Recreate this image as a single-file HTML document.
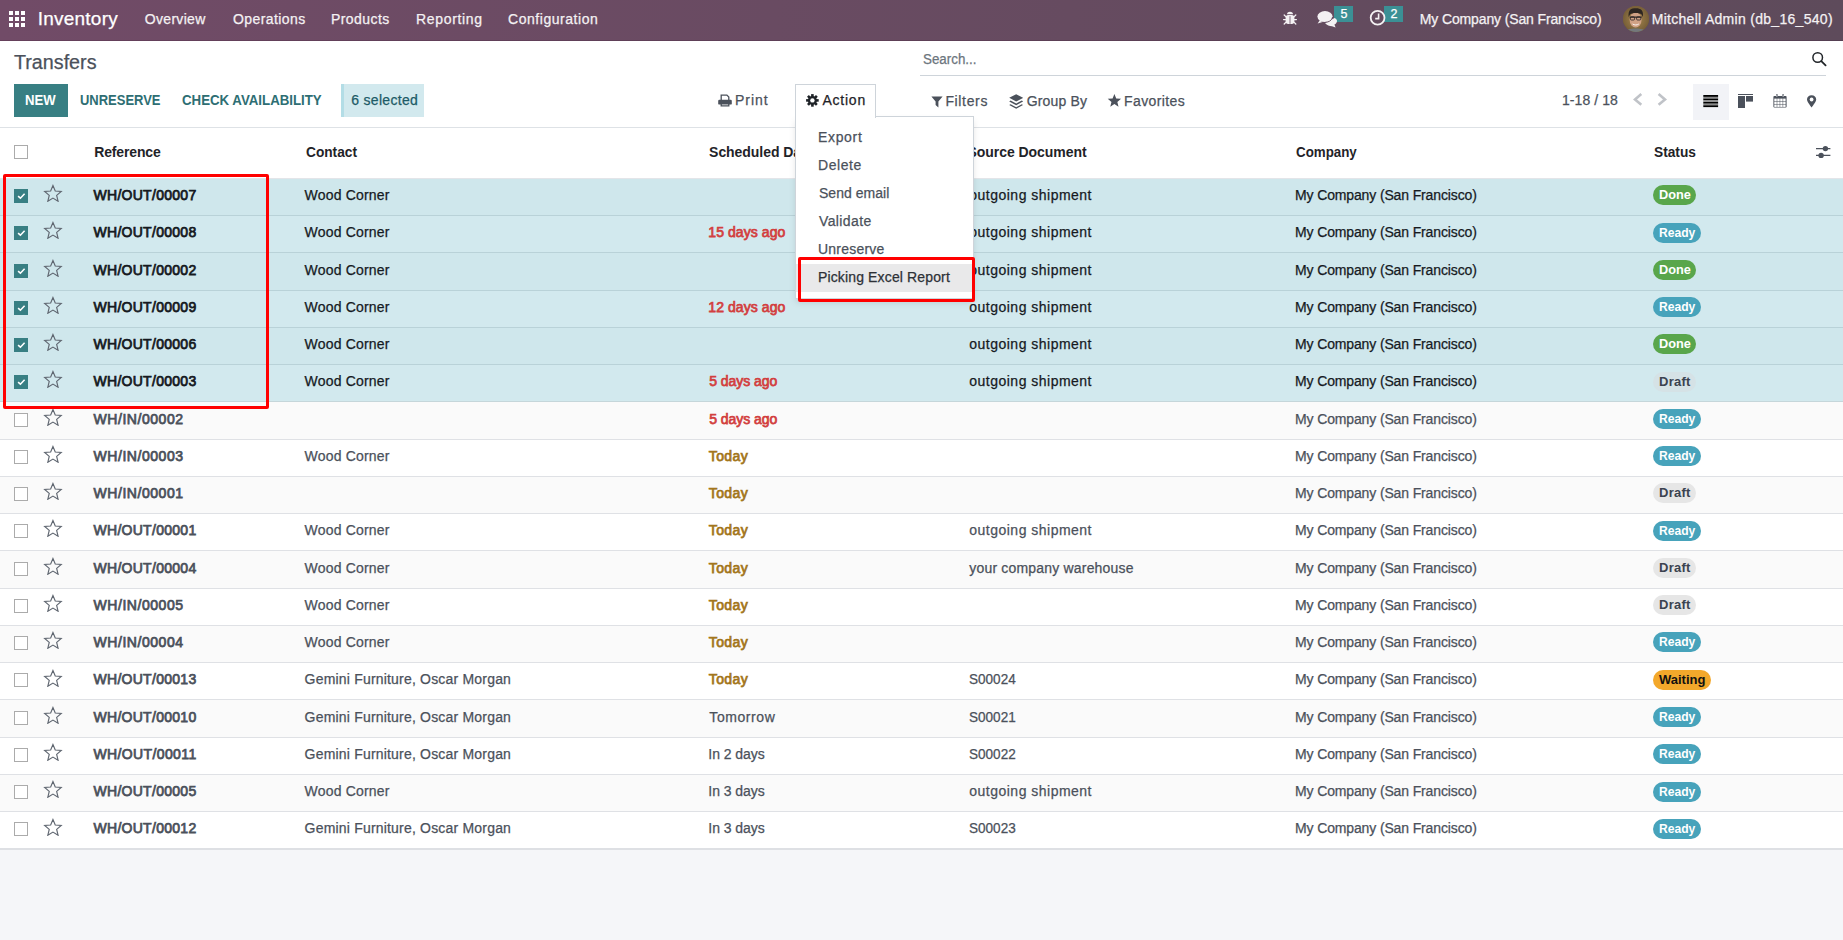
<!DOCTYPE html>
<html><head><meta charset="utf-8"><style>
html,body{margin:0;padding:0;width:1843px;height:940px;overflow:hidden;background:#fff;font-family:"Liberation Sans", sans-serif;}
.a{position:absolute;}
.t{position:absolute;white-space:nowrap;-webkit-text-stroke:0.25px currentColor;}
.badge{position:absolute;height:20px;line-height:20px;border-radius:10px;font-size:12.5px;font-weight:700;text-align:center;font-family:"Liberation Sans", sans-serif;}
svg{position:absolute;}
</style></head><body>
<div class="a" style="left:0.00px;top:0.00px;width:1843.00px;height:40.00px;background:linear-gradient(to right,#714b67,#5e4b5b);"></div><div class="a" style="left:0.00px;top:40.00px;width:1843.00px;height:1.00px;background:linear-gradient(to right,#65405b,#553f52);"></div><div class="a" style="left:8.80px;top:10.90px;width:4.50px;height:4.50px;background:#fff;"></div><div class="a" style="left:14.80px;top:10.90px;width:4.50px;height:4.50px;background:#fff;"></div><div class="a" style="left:20.80px;top:10.90px;width:4.50px;height:4.50px;background:#fff;"></div><div class="a" style="left:8.80px;top:16.90px;width:4.50px;height:4.50px;background:#fff;"></div><div class="a" style="left:14.80px;top:16.90px;width:4.50px;height:4.50px;background:#fff;"></div><div class="a" style="left:20.80px;top:16.90px;width:4.50px;height:4.50px;background:#fff;"></div><div class="a" style="left:8.80px;top:22.90px;width:4.50px;height:4.50px;background:#fff;"></div><div class="a" style="left:14.80px;top:22.90px;width:4.50px;height:4.50px;background:#fff;"></div><div class="a" style="left:20.80px;top:22.90px;width:4.50px;height:4.50px;background:#fff;"></div><div class="t" style="left:37.70px;top:9.32px;font-size:19px;line-height:20px;color:#fff;font-weight:400;letter-spacing:0.231px;">Inventory</div><div class="t" style="left:144.80px;top:9.15px;font-size:14px;line-height:20px;color:#f4f1f3;font-weight:400;letter-spacing:0.309px;">Overview</div><div class="t" style="left:233.00px;top:9.15px;font-size:14px;line-height:20px;color:#f4f1f3;font-weight:400;letter-spacing:0.413px;">Operations</div><div class="t" style="left:331.00px;top:9.15px;font-size:14px;line-height:20px;color:#f4f1f3;font-weight:400;letter-spacing:0.436px;">Products</div><div class="t" style="left:416.00px;top:9.15px;font-size:14px;line-height:20px;color:#f4f1f3;font-weight:400;letter-spacing:0.673px;">Reporting</div><div class="t" style="left:508.00px;top:9.15px;font-size:14px;line-height:20px;color:#f4f1f3;font-weight:400;letter-spacing:0.543px;">Configuration</div><div class="t" style="left:1419.80px;top:9.15px;font-size:14px;line-height:20px;color:#f4f1f3;font-weight:400;letter-spacing:-0.134px;">My Company (San Francisco)</div><div class="t" style="left:1651.70px;top:9.15px;font-size:14px;line-height:20px;color:#f4f1f3;font-weight:400;letter-spacing:0.294px;">Mitchell Admin (db_16_540)</div><div class="a" style="left:1623.00px;top:6.00px;width:26.00px;height:26.00px;border-radius:50%;background:radial-gradient(circle at 50% 45%,#d9b48f 0,#b88a5e 35%,#6b5236 70%,#3d3a36 100%);"></div><div class="a" style="left:1334.00px;top:6.00px;width:19.00px;height:16.00px;background:#3b9095;"></div><div class="t" style="left:1340.50px;top:3.77px;font-size:12.5px;line-height:20px;color:#fff;font-weight:400;letter-spacing:0.000px;">5</div><div class="a" style="left:1384.00px;top:6.00px;width:19.00px;height:16.00px;background:#3b9095;"></div><div class="t" style="left:1390.50px;top:3.77px;font-size:12.5px;line-height:20px;color:#fff;font-weight:400;letter-spacing:0.000px;">2</div><div class="t" style="left:14.00px;top:52.17px;font-size:20px;line-height:20px;color:#4b515b;font-weight:400;letter-spacing:0.000px;transform:scaleX(0.9854);transform-origin:0.00px 0;">Transfers</div><div class="t" style="left:922.60px;top:49.05px;font-size:14px;line-height:20px;color:#6c757d;font-weight:400;letter-spacing:0.000px;transform:scaleX(0.9540);transform-origin:0.00px 0;">Search...</div><div class="a" style="left:920.00px;top:75.00px;width:906.00px;height:1.00px;background:#ced4da;"></div><div class="a" style="left:14.00px;top:84.00px;width:54.00px;height:33.00px;background:#387f83;"></div><div class="t" style="left:25.20px;top:90.25px;font-size:14px;line-height:20px;color:#fff;font-weight:700;letter-spacing:0.000px;-webkit-text-stroke:0;transform:scaleX(0.9388);transform-origin:0.00px 0;">NEW</div><div class="t" style="left:79.80px;top:90.25px;font-size:14px;line-height:20px;color:#2e6e73;font-weight:700;letter-spacing:0.000px;-webkit-text-stroke:0;transform:scaleX(0.9267);transform-origin:0.00px 0;">UNRESERVE</div><div class="t" style="left:182.00px;top:90.25px;font-size:14px;line-height:20px;color:#2e6e73;font-weight:700;letter-spacing:0.000px;-webkit-text-stroke:0;transform:scaleX(0.9469);transform-origin:0.00px 0;">CHECK AVAILABILITY</div><div class="a" style="left:341.00px;top:84.00px;width:83.00px;height:33.00px;background:#d2e9ee;border-left:3px solid #b3dde6;box-sizing:border-box;"></div><div class="t" style="left:351.20px;top:89.65px;font-size:14px;line-height:20px;color:#1d5b67;font-weight:400;letter-spacing:0.318px;">6 selected</div><div class="a" style="left:795.00px;top:84.00px;width:81.00px;height:34.00px;background:#fff;border:1px solid #ced4da;border-bottom:none;box-sizing:border-box;z-index:11;"></div><div class="t" style="left:735.00px;top:90.25px;font-size:14px;line-height:20px;color:#4b515b;font-weight:400;letter-spacing:0.976px;">Print</div><div class="t" style="left:822.40px;top:90.25px;font-size:14px;line-height:20px;color:#1f2328;font-weight:400;letter-spacing:0.775px;z-index:12;">Action</div><div class="t" style="left:945.40px;top:90.95px;font-size:14px;line-height:20px;color:#4b515b;font-weight:400;letter-spacing:0.648px;">Filters</div><div class="t" style="left:1026.70px;top:90.95px;font-size:14px;line-height:20px;color:#4b515b;font-weight:400;letter-spacing:0.152px;">Group By</div><div class="t" style="left:1124.00px;top:90.95px;font-size:14px;line-height:20px;color:#4b515b;font-weight:400;letter-spacing:0.403px;">Favorites</div><div class="t" style="left:1562.00px;top:90.25px;font-size:14px;line-height:20px;color:#4b515b;font-weight:400;letter-spacing:0.066px;">1-18 / 18</div><div class="a" style="left:1693.00px;top:84.00px;width:36.00px;height:36.00px;background:#f2f3f7;"></div><div class="a" style="left:0.00px;top:127.00px;width:1843.00px;height:1.00px;background:#dee2e6;"></div><svg style="left:1282px;top:9.6px;" width="16" height="15" viewBox="0 0 16 15"><g fill="#f4f1f3" stroke="none"><path d="M5 4.3 A3 2.6 0 0 1 11 4.3 Z"/><rect x="3.6" y="4.9" width="8.8" height="9" rx="2.6"/></g><g stroke="#f4f1f3" stroke-width="1.3" fill="none" stroke-linecap="round"><path d="M3.8 6.6 L2.2 5 M3.6 9.6 H1.6 M3.8 12.4 L2.2 14 M12.2 6.6 L13.8 5 M12.4 9.6 H14.4 M12.2 12.4 L13.8 14"/></g><rect x="7.6" y="6.2" width="0.8" height="7.6" fill="#6a4b63"/></svg><svg style="left:1316px;top:10px;" width="22" height="18" viewBox="0 0 22 18"><g fill="#f4f1f3"><path d="M9 13 C11 15.5 13.5 16 16 16.2 L19.6 17.6 L18.4 14.6 C20 13.8 21 12.4 21 11 C21 9.5 20 8.5 18.5 8 Z"/><ellipse cx="9" cy="6.6" rx="7.6" ry="5.5"/><path d="M3.6 10.5 L1.6 13.6 L6.6 12 Z"/></g><path d="M9 12.4 C12 12.4 16 10.8 16.6 7" stroke="#634a5f" stroke-width="0.9" fill="none"/></svg><svg style="left:1369px;top:9.2px;" width="18" height="18" viewBox="0 0 18 18"><circle cx="8.6" cy="8.7" r="6.9" fill="none" stroke="#f4f1f3" stroke-width="1.8"/><path d="M9.6 4.6 V9.6 H6.2" fill="none" stroke="#f4f1f3" stroke-width="1.6"/></svg><svg style="left:1623px;top:6px;" width="26" height="26" viewBox="0 0 26 26"><defs><clipPath id="av"><circle cx="13" cy="13" r="13"/></clipPath><radialGradient id="avg" cx="50%" cy="50%" r="60%"><stop offset="0" stop-color="#a9874f"/><stop offset="1" stop-color="#6d5733"/></radialGradient></defs><g clip-path="url(#av)"><rect width="26" height="26" fill="url(#avg)"/><ellipse cx="12.6" cy="13.8" rx="6" ry="7.6" fill="#d0a185"/><path d="M5.6 11 C5 3.5 8 2.2 12.8 2.2 C18 2.2 20.6 4 20 11 L18.6 8.6 C16.5 6.6 9 6.6 7 8.6 Z" fill="#2e2622"/><path d="M6.8 11.2 H18.6" stroke="#2a2524" stroke-width="1.3"/><rect x="7.4" y="10.8" width="4.2" height="3.2" rx="1" fill="none" stroke="#2a2524" stroke-width="0.8"/><rect x="13.6" y="10.8" width="4.2" height="3.2" rx="1" fill="none" stroke="#2a2524" stroke-width="0.8"/><path d="M9.6 18 C11.5 19.3 14 19.3 15.8 18" stroke="#fff" stroke-width="0.9" fill="none"/><path d="M1 27 C3 21 22 21 25 27 Z" fill="#73787c"/></g></svg><svg style="left:1810px;top:50px;" width="18" height="18" viewBox="0 0 18 18"><circle cx="7.7" cy="7.5" r="4.8" fill="none" stroke="#212529" stroke-width="1.5"/><path d="M11.3 11.2 L15.6 15.3" stroke="#212529" stroke-width="1.8" stroke-linecap="round"/></svg><svg style="left:718px;top:93.5px;" width="14" height="13" viewBox="0 0 14 13"><g fill="none" stroke="#4b515b" stroke-width="1.3"><path d="M3.2 6 V1.1 H8.9 L10.8 3 V6"/><path d="M3.2 9.6 V11.9 H10.8 V9.6"/></g><rect x="0.2" y="5.8" width="13.6" height="4.8" rx="1.2" fill="#4b515b"/></svg><svg style="left:806px;top:93.6px;z-index:12;" width="13" height="13" viewBox="0 0 13 13"><g fill="#1f2328"><rect x="5.1" y="0.1" width="2.6" height="3" transform="rotate(0 6.4 6.4)"/><rect x="5.1" y="0.1" width="2.6" height="3" transform="rotate(45 6.4 6.4)"/><rect x="5.1" y="0.1" width="2.6" height="3" transform="rotate(90 6.4 6.4)"/><rect x="5.1" y="0.1" width="2.6" height="3" transform="rotate(135 6.4 6.4)"/><rect x="5.1" y="0.1" width="2.6" height="3" transform="rotate(180 6.4 6.4)"/><rect x="5.1" y="0.1" width="2.6" height="3" transform="rotate(225 6.4 6.4)"/><rect x="5.1" y="0.1" width="2.6" height="3" transform="rotate(270 6.4 6.4)"/><rect x="5.1" y="0.1" width="2.6" height="3" transform="rotate(315 6.4 6.4)"/><circle cx="6.4" cy="6.4" r="4.5"/></g><circle cx="6.4" cy="6.4" r="2.2" fill="#fff"/></svg><svg style="left:930.5px;top:95.5px;" width="12" height="12" viewBox="0 0 12 12"><path d="M0.4 0.4 H11.6 L7.4 5.4 V11.6 L4.6 9 V5.4 Z" fill="#4b515b"/></svg><svg style="left:1008.5px;top:93.5px;" width="14.5" height="15" viewBox="0 0 14.5 15"><g fill="#4b515b"><path d="M7.2 0.2 L14.2 3.8 L7.2 7.6 L0.2 3.8 Z"/><path d="M1.6 6.6 L7.2 9.6 L12.8 6.6 L14.2 7.4 L7.2 11.2 L0.2 7.4 Z"/><path d="M1.6 10.2 L7.2 13.2 L12.8 10.2 L14.2 11 L7.2 14.8 L0.2 11 Z"/></g></svg><svg style="left:1107px;top:93px;" width="15" height="15" viewBox="0 0 15 15"><polygon points="7.40,1.00 9.22,5.49 14.06,5.84 10.35,8.96 11.51,13.66 7.40,11.10 3.29,13.66 4.45,8.96 0.74,5.84 5.58,5.49" fill="#4b515b"/></svg><svg style="left:1632px;top:92px;" width="12" height="15" viewBox="0 0 12 15"><path d="M9.3 2 L3 7.4 L9.3 12.8" fill="none" stroke="#c0c3c8" stroke-width="2.6"/></svg><svg style="left:1656px;top:92px;" width="12" height="15" viewBox="0 0 12 15"><path d="M2.6 2 L9 7.4 L2.6 12.8" fill="none" stroke="#c0c3c8" stroke-width="2.6"/></svg><svg style="left:1703px;top:94px;" width="16" height="14" viewBox="0 0 16 14"><g fill="#000"><rect x="0.3" y="1" width="14.8" height="1.9"/><rect x="0.3" y="4.4" width="14.8" height="1.9"/><rect x="0.3" y="7.8" width="14.8" height="1.9"/><rect x="0.3" y="11.2" width="14.8" height="1.9"/></g><g fill="#888"><rect x="0.3" y="2.9" width="14.8" height="1.5"/><rect x="0.3" y="6.3" width="14.8" height="1.5"/><rect x="0.3" y="9.7" width="14.8" height="1.5"/></g></svg><svg style="left:1738px;top:94px;" width="16" height="15" viewBox="0 0 16 15"><g fill="#4b515b"><rect x="0" y="0" width="15" height="1"/><rect x="0" y="2" width="7" height="12"/><rect x="8" y="2" width="7" height="5.6"/></g></svg><svg style="left:1773.3px;top:94px;" width="14" height="14" viewBox="0 0 14 14"><rect x="0.4" y="2" width="13.2" height="11.6" rx="1" fill="#4b515b"/><g fill="#fff"><rect x="1.30" y="4.60" width="2.45" height="2.45"/><rect x="1.30" y="7.55" width="2.45" height="2.45"/><rect x="1.30" y="10.50" width="2.45" height="2.45"/><rect x="4.25" y="4.60" width="2.45" height="2.45"/><rect x="4.25" y="7.55" width="2.45" height="2.45"/><rect x="4.25" y="10.50" width="2.45" height="2.45"/><rect x="7.20" y="4.60" width="2.45" height="2.45"/><rect x="7.20" y="7.55" width="2.45" height="2.45"/><rect x="7.20" y="10.50" width="2.45" height="2.45"/><rect x="10.15" y="4.60" width="2.45" height="2.45"/><rect x="10.15" y="7.55" width="2.45" height="2.45"/><rect x="10.15" y="10.50" width="2.45" height="2.45"/></g><g fill="#4b515b"><rect x="3" y="0" width="1.8" height="3.4" rx="0.9"/><rect x="9.2" y="0" width="1.8" height="3.4" rx="0.9"/></g><rect x="3.5" y="0.6" width="0.8" height="2.2" fill="#fff"/><rect x="9.7" y="0.6" width="0.8" height="2.2" fill="#fff"/></svg><svg style="left:1806.5px;top:94.5px;" width="10" height="13" viewBox="0 0 10 13"><path d="M4.6 0.3 C7.3 0.3 9.2 2.2 9.2 4.6 C9.2 6.6 6.5 10 4.6 12.6 C2.7 10 0 6.6 0 4.6 C0 2.2 1.9 0.3 4.6 0.3 Z" fill="#4b515b"/><circle cx="4.6" cy="4.5" r="1.9" fill="#fff"/></svg><div class="a" style="left:0.00px;top:128.00px;width:1843.00px;height:50.00px;background:#fff;"></div><div class="a" style="left:0.00px;top:178.00px;width:1843.00px;height:1.00px;background:#e3e6ea;"></div><div class="t" style="left:94.20px;top:142.05px;font-size:14px;line-height:20px;color:#1f2328;font-weight:700;letter-spacing:-0.140px;-webkit-text-stroke:0;">Reference</div><div class="t" style="left:305.50px;top:142.05px;font-size:14px;line-height:20px;color:#1f2328;font-weight:700;letter-spacing:0.000px;-webkit-text-stroke:0;transform:scaleX(0.9781);transform-origin:0.00px 0;">Contact</div><div class="t" style="left:709.10px;top:142.05px;font-size:14px;line-height:20px;color:#1f2328;font-weight:700;letter-spacing:-0.050px;-webkit-text-stroke:0;">Scheduled Date</div><div class="t" style="left:1296.40px;top:142.05px;font-size:14px;line-height:20px;color:#1f2328;font-weight:700;letter-spacing:0.000px;-webkit-text-stroke:0;transform:scaleX(0.9531);transform-origin:0.00px 0;">Company</div><div class="t" style="left:1653.90px;top:142.05px;font-size:14px;line-height:20px;color:#1f2328;font-weight:700;letter-spacing:0.000px;-webkit-text-stroke:0;transform:scaleX(0.9791);transform-origin:0.00px 0;">Status</div><div class="t" style="left:967.56px;top:142.05px;font-size:14px;line-height:20px;color:#1f2328;font-weight:700;letter-spacing:-0.050px;-webkit-text-stroke:0;">Source Document</div><svg style="left:1815px;top:144px;" width="17" height="15" viewBox="0 0 17 15"><g stroke="#4b515b" stroke-width="1.2"><path d="M1 4.6 H15.4 M1 11.4 H15.4"/></g><g fill="#4b515b"><circle cx="10.4" cy="4.6" r="2.7"/><circle cx="6.1" cy="11.4" r="2.7"/></g></svg><div class="a" style="left:14.00px;top:145.00px;width:14.00px;height:14.00px;border:1px solid #ababab;box-sizing:border-box;background:#fff;"></div><div class="a" style="left:0.00px;top:178.34px;width:1843.00px;height:37.26px;background:#cfe7ec;"></div><div class="a" style="left:0.00px;top:215.60px;width:1843.00px;height:37.26px;background:#d2e9ee;"></div><div class="a" style="left:0.00px;top:252.86px;width:1843.00px;height:37.26px;background:#cfe7ec;"></div><div class="a" style="left:0.00px;top:290.12px;width:1843.00px;height:37.26px;background:#d2e9ee;"></div><div class="a" style="left:0.00px;top:327.38px;width:1843.00px;height:37.26px;background:#cfe7ec;"></div><div class="a" style="left:0.00px;top:364.64px;width:1843.00px;height:37.26px;background:#d2e9ee;"></div><div class="a" style="left:0.00px;top:401.90px;width:1843.00px;height:37.26px;background:#fafafa;"></div><div class="a" style="left:0.00px;top:439.16px;width:1843.00px;height:37.26px;background:#ffffff;"></div><div class="a" style="left:0.00px;top:476.42px;width:1843.00px;height:37.26px;background:#fafafa;"></div><div class="a" style="left:0.00px;top:513.68px;width:1843.00px;height:37.26px;background:#ffffff;"></div><div class="a" style="left:0.00px;top:550.94px;width:1843.00px;height:37.26px;background:#fafafa;"></div><div class="a" style="left:0.00px;top:588.20px;width:1843.00px;height:37.26px;background:#ffffff;"></div><div class="a" style="left:0.00px;top:625.46px;width:1843.00px;height:37.26px;background:#fafafa;"></div><div class="a" style="left:0.00px;top:662.72px;width:1843.00px;height:37.26px;background:#ffffff;"></div><div class="a" style="left:0.00px;top:699.98px;width:1843.00px;height:37.26px;background:#fafafa;"></div><div class="a" style="left:0.00px;top:737.24px;width:1843.00px;height:37.26px;background:#ffffff;"></div><div class="a" style="left:0.00px;top:774.50px;width:1843.00px;height:37.26px;background:#fafafa;"></div><div class="a" style="left:0.00px;top:811.76px;width:1843.00px;height:37.26px;background:#ffffff;"></div><div class="a" style="left:0.00px;top:178.00px;width:1843.00px;height:1.00px;background:#e3e5e9;"></div><div class="a" style="left:0.00px;top:215.10px;width:1843.00px;height:1.00px;background:#b9d2d8;"></div><div class="a" style="left:0.00px;top:252.36px;width:1843.00px;height:1.00px;background:#b9d2d8;"></div><div class="a" style="left:0.00px;top:289.62px;width:1843.00px;height:1.00px;background:#b9d2d8;"></div><div class="a" style="left:0.00px;top:326.88px;width:1843.00px;height:1.00px;background:#b9d2d8;"></div><div class="a" style="left:0.00px;top:364.14px;width:1843.00px;height:1.00px;background:#b9d2d8;"></div><div class="a" style="left:0.00px;top:401.40px;width:1843.00px;height:1.00px;background:#c5d6da;"></div><div class="a" style="left:0.00px;top:438.66px;width:1843.00px;height:1.00px;background:#dfe1e5;"></div><div class="a" style="left:0.00px;top:475.92px;width:1843.00px;height:1.00px;background:#dfe1e5;"></div><div class="a" style="left:0.00px;top:513.18px;width:1843.00px;height:1.00px;background:#dfe1e5;"></div><div class="a" style="left:0.00px;top:550.44px;width:1843.00px;height:1.00px;background:#dfe1e5;"></div><div class="a" style="left:0.00px;top:587.70px;width:1843.00px;height:1.00px;background:#dfe1e5;"></div><div class="a" style="left:0.00px;top:624.96px;width:1843.00px;height:1.00px;background:#dfe1e5;"></div><div class="a" style="left:0.00px;top:662.22px;width:1843.00px;height:1.00px;background:#dfe1e5;"></div><div class="a" style="left:0.00px;top:699.48px;width:1843.00px;height:1.00px;background:#dfe1e5;"></div><div class="a" style="left:0.00px;top:736.74px;width:1843.00px;height:1.00px;background:#dfe1e5;"></div><div class="a" style="left:0.00px;top:774.00px;width:1843.00px;height:1.00px;background:#dfe1e5;"></div><div class="a" style="left:0.00px;top:811.26px;width:1843.00px;height:1.00px;background:#dfe1e5;"></div><div class="t" style="left:93.50px;top:184.99px;font-size:14px;line-height:20px;color:#161a1f;font-weight:400;letter-spacing:0.282px;-webkit-text-stroke:0.75px currentColor;">WH/OUT/00007</div><div class="t" style="left:304.60px;top:184.99px;font-size:14px;line-height:20px;color:#161a1f;font-weight:400;letter-spacing:0.186px;">Wood Corner</div><div class="t" style="left:969.30px;top:184.99px;font-size:14px;line-height:20px;color:#161a1f;font-weight:400;letter-spacing:0.486px;">outgoing shipment</div><div class="t" style="left:1295.00px;top:184.99px;font-size:14px;line-height:20px;color:#161a1f;font-weight:400;letter-spacing:-0.134px;">My Company (San Francisco)</div><div class="badge" style="left:1653px;top:185.34px;width:43px;background:#59a64b;"></div><div class="t" style="left:1659.00px;top:185.34px;font-size:13px;line-height:20px;color:#fff;font-weight:700;letter-spacing:0.000px;-webkit-text-stroke:0;transform:scaleX(0.9823);transform-origin:0.00px 0;">Done</div><svg style="left:43px;top:184.14000000000001px;" width="20" height="18" viewBox="0 0 20 18"><polygon points="9.95,1.50 12.24,7.04 18.22,7.51 13.66,11.41 15.06,17.24 9.95,14.10 4.84,17.24 6.24,11.41 1.68,7.51 7.66,7.04" fill="none" stroke="#5f6670" stroke-width="1.15" stroke-linejoin="miter"/></svg><div class="a" style="left:14.00px;top:189.04px;width:14.00px;height:14.00px;background:#387f83;"></div><svg style="left:14px;top:189.04px;" width="14" height="14" viewBox="0 0 14 14"><path d="M4.1 7.2 L6.4 9.2 L10.6 4.8" fill="none" stroke="#fff" stroke-width="1.6"/></svg><div class="t" style="left:93.50px;top:222.25px;font-size:14px;line-height:20px;color:#161a1f;font-weight:400;letter-spacing:0.282px;-webkit-text-stroke:0.75px currentColor;">WH/OUT/00008</div><div class="t" style="left:304.60px;top:222.25px;font-size:14px;line-height:20px;color:#161a1f;font-weight:400;letter-spacing:0.186px;">Wood Corner</div><div class="t" style="left:708.30px;top:222.25px;font-size:14px;line-height:20px;color:#d23f3f;font-weight:400;letter-spacing:0.070px;-webkit-text-stroke:0.75px currentColor;">15 days ago</div><div class="t" style="left:969.30px;top:222.25px;font-size:14px;line-height:20px;color:#161a1f;font-weight:400;letter-spacing:0.486px;">outgoing shipment</div><div class="t" style="left:1295.00px;top:222.25px;font-size:14px;line-height:20px;color:#161a1f;font-weight:400;letter-spacing:-0.134px;">My Company (San Francisco)</div><div class="badge" style="left:1653px;top:222.60px;width:48px;background:#47a3bb;"></div><div class="t" style="left:1659.00px;top:222.60px;font-size:13px;line-height:20px;color:#fff;font-weight:700;letter-spacing:0.000px;-webkit-text-stroke:0;transform:scaleX(0.9299);transform-origin:0.00px 0;">Ready</div><svg style="left:43px;top:221.4px;" width="20" height="18" viewBox="0 0 20 18"><polygon points="9.95,1.50 12.24,7.04 18.22,7.51 13.66,11.41 15.06,17.24 9.95,14.10 4.84,17.24 6.24,11.41 1.68,7.51 7.66,7.04" fill="none" stroke="#5f6670" stroke-width="1.15" stroke-linejoin="miter"/></svg><div class="a" style="left:14.00px;top:226.30px;width:14.00px;height:14.00px;background:#387f83;"></div><svg style="left:14px;top:226.29999999999998px;" width="14" height="14" viewBox="0 0 14 14"><path d="M4.1 7.2 L6.4 9.2 L10.6 4.8" fill="none" stroke="#fff" stroke-width="1.6"/></svg><div class="t" style="left:93.50px;top:259.51px;font-size:14px;line-height:20px;color:#161a1f;font-weight:400;letter-spacing:0.282px;-webkit-text-stroke:0.75px currentColor;">WH/OUT/00002</div><div class="t" style="left:304.60px;top:259.51px;font-size:14px;line-height:20px;color:#161a1f;font-weight:400;letter-spacing:0.186px;">Wood Corner</div><div class="t" style="left:969.30px;top:259.51px;font-size:14px;line-height:20px;color:#161a1f;font-weight:400;letter-spacing:0.486px;">outgoing shipment</div><div class="t" style="left:1295.00px;top:259.51px;font-size:14px;line-height:20px;color:#161a1f;font-weight:400;letter-spacing:-0.134px;">My Company (San Francisco)</div><div class="badge" style="left:1653px;top:259.86px;width:43px;background:#59a64b;"></div><div class="t" style="left:1659.00px;top:259.86px;font-size:13px;line-height:20px;color:#fff;font-weight:700;letter-spacing:0.000px;-webkit-text-stroke:0;transform:scaleX(0.9823);transform-origin:0.00px 0;">Done</div><svg style="left:43px;top:258.66px;" width="20" height="18" viewBox="0 0 20 18"><polygon points="9.95,1.50 12.24,7.04 18.22,7.51 13.66,11.41 15.06,17.24 9.95,14.10 4.84,17.24 6.24,11.41 1.68,7.51 7.66,7.04" fill="none" stroke="#5f6670" stroke-width="1.15" stroke-linejoin="miter"/></svg><div class="a" style="left:14.00px;top:263.56px;width:14.00px;height:14.00px;background:#387f83;"></div><svg style="left:14px;top:263.56px;" width="14" height="14" viewBox="0 0 14 14"><path d="M4.1 7.2 L6.4 9.2 L10.6 4.8" fill="none" stroke="#fff" stroke-width="1.6"/></svg><div class="t" style="left:93.50px;top:296.77px;font-size:14px;line-height:20px;color:#161a1f;font-weight:400;letter-spacing:0.282px;-webkit-text-stroke:0.75px currentColor;">WH/OUT/00009</div><div class="t" style="left:304.60px;top:296.77px;font-size:14px;line-height:20px;color:#161a1f;font-weight:400;letter-spacing:0.186px;">Wood Corner</div><div class="t" style="left:708.30px;top:296.77px;font-size:14px;line-height:20px;color:#d23f3f;font-weight:400;letter-spacing:0.070px;-webkit-text-stroke:0.75px currentColor;">12 days ago</div><div class="t" style="left:969.30px;top:296.77px;font-size:14px;line-height:20px;color:#161a1f;font-weight:400;letter-spacing:0.486px;">outgoing shipment</div><div class="t" style="left:1295.00px;top:296.77px;font-size:14px;line-height:20px;color:#161a1f;font-weight:400;letter-spacing:-0.134px;">My Company (San Francisco)</div><div class="badge" style="left:1653px;top:297.12px;width:48px;background:#47a3bb;"></div><div class="t" style="left:1659.00px;top:297.12px;font-size:13px;line-height:20px;color:#fff;font-weight:700;letter-spacing:0.000px;-webkit-text-stroke:0;transform:scaleX(0.9299);transform-origin:0.00px 0;">Ready</div><svg style="left:43px;top:295.92px;" width="20" height="18" viewBox="0 0 20 18"><polygon points="9.95,1.50 12.24,7.04 18.22,7.51 13.66,11.41 15.06,17.24 9.95,14.10 4.84,17.24 6.24,11.41 1.68,7.51 7.66,7.04" fill="none" stroke="#5f6670" stroke-width="1.15" stroke-linejoin="miter"/></svg><div class="a" style="left:14.00px;top:300.82px;width:14.00px;height:14.00px;background:#387f83;"></div><svg style="left:14px;top:300.82px;" width="14" height="14" viewBox="0 0 14 14"><path d="M4.1 7.2 L6.4 9.2 L10.6 4.8" fill="none" stroke="#fff" stroke-width="1.6"/></svg><div class="t" style="left:93.50px;top:334.03px;font-size:14px;line-height:20px;color:#161a1f;font-weight:400;letter-spacing:0.282px;-webkit-text-stroke:0.75px currentColor;">WH/OUT/00006</div><div class="t" style="left:304.60px;top:334.03px;font-size:14px;line-height:20px;color:#161a1f;font-weight:400;letter-spacing:0.186px;">Wood Corner</div><div class="t" style="left:969.30px;top:334.03px;font-size:14px;line-height:20px;color:#161a1f;font-weight:400;letter-spacing:0.486px;">outgoing shipment</div><div class="t" style="left:1295.00px;top:334.03px;font-size:14px;line-height:20px;color:#161a1f;font-weight:400;letter-spacing:-0.134px;">My Company (San Francisco)</div><div class="badge" style="left:1653px;top:334.38px;width:43px;background:#59a64b;"></div><div class="t" style="left:1659.00px;top:334.38px;font-size:13px;line-height:20px;color:#fff;font-weight:700;letter-spacing:0.000px;-webkit-text-stroke:0;transform:scaleX(0.9823);transform-origin:0.00px 0;">Done</div><svg style="left:43px;top:333.18px;" width="20" height="18" viewBox="0 0 20 18"><polygon points="9.95,1.50 12.24,7.04 18.22,7.51 13.66,11.41 15.06,17.24 9.95,14.10 4.84,17.24 6.24,11.41 1.68,7.51 7.66,7.04" fill="none" stroke="#5f6670" stroke-width="1.15" stroke-linejoin="miter"/></svg><div class="a" style="left:14.00px;top:338.08px;width:14.00px;height:14.00px;background:#387f83;"></div><svg style="left:14px;top:338.08px;" width="14" height="14" viewBox="0 0 14 14"><path d="M4.1 7.2 L6.4 9.2 L10.6 4.8" fill="none" stroke="#fff" stroke-width="1.6"/></svg><div class="t" style="left:93.50px;top:371.29px;font-size:14px;line-height:20px;color:#161a1f;font-weight:400;letter-spacing:0.282px;-webkit-text-stroke:0.75px currentColor;">WH/OUT/00003</div><div class="t" style="left:304.60px;top:371.29px;font-size:14px;line-height:20px;color:#161a1f;font-weight:400;letter-spacing:0.186px;">Wood Corner</div><div class="t" style="left:709.30px;top:371.29px;font-size:14px;line-height:20px;color:#d23f3f;font-weight:400;letter-spacing:-0.057px;-webkit-text-stroke:0.75px currentColor;">5 days ago</div><div class="t" style="left:969.30px;top:371.29px;font-size:14px;line-height:20px;color:#161a1f;font-weight:400;letter-spacing:0.486px;">outgoing shipment</div><div class="t" style="left:1295.00px;top:371.29px;font-size:14px;line-height:20px;color:#161a1f;font-weight:400;letter-spacing:-0.134px;">My Company (San Francisco)</div><div class="badge" style="left:1653px;top:371.64px;width:43px;background:#d5e2e6;"></div><div class="t" style="left:1659.00px;top:371.64px;font-size:13px;line-height:20px;color:#3b4350;font-weight:700;letter-spacing:0.273px;-webkit-text-stroke:0;">Draft</div><svg style="left:43px;top:370.44px;" width="20" height="18" viewBox="0 0 20 18"><polygon points="9.95,1.50 12.24,7.04 18.22,7.51 13.66,11.41 15.06,17.24 9.95,14.10 4.84,17.24 6.24,11.41 1.68,7.51 7.66,7.04" fill="none" stroke="#5f6670" stroke-width="1.15" stroke-linejoin="miter"/></svg><div class="a" style="left:14.00px;top:375.34px;width:14.00px;height:14.00px;background:#387f83;"></div><svg style="left:14px;top:375.34px;" width="14" height="14" viewBox="0 0 14 14"><path d="M4.1 7.2 L6.4 9.2 L10.6 4.8" fill="none" stroke="#fff" stroke-width="1.6"/></svg><div class="t" style="left:93.50px;top:408.55px;font-size:14px;line-height:20px;color:#4b515b;font-weight:400;letter-spacing:0.555px;-webkit-text-stroke:0.75px currentColor;">WH/IN/00002</div><div class="t" style="left:709.30px;top:408.55px;font-size:14px;line-height:20px;color:#d23f3f;font-weight:400;letter-spacing:-0.057px;-webkit-text-stroke:0.75px currentColor;">5 days ago</div><div class="t" style="left:1295.00px;top:408.55px;font-size:14px;line-height:20px;color:#4b515b;font-weight:400;letter-spacing:-0.134px;">My Company (San Francisco)</div><div class="badge" style="left:1653px;top:408.90px;width:48px;background:#47a3bb;"></div><div class="t" style="left:1659.00px;top:408.90px;font-size:13px;line-height:20px;color:#fff;font-weight:700;letter-spacing:0.000px;-webkit-text-stroke:0;transform:scaleX(0.9299);transform-origin:0.00px 0;">Ready</div><svg style="left:43px;top:407.7px;" width="20" height="18" viewBox="0 0 20 18"><polygon points="9.95,1.50 12.24,7.04 18.22,7.51 13.66,11.41 15.06,17.24 9.95,14.10 4.84,17.24 6.24,11.41 1.68,7.51 7.66,7.04" fill="none" stroke="#5f6670" stroke-width="1.15" stroke-linejoin="miter"/></svg><div class="a" style="left:14.00px;top:412.60px;width:14.00px;height:14.00px;border:1px solid #ababab;box-sizing:border-box;background:#fff;"></div><div class="t" style="left:93.50px;top:445.81px;font-size:14px;line-height:20px;color:#4b515b;font-weight:400;letter-spacing:0.555px;-webkit-text-stroke:0.75px currentColor;">WH/IN/00003</div><div class="t" style="left:304.60px;top:445.81px;font-size:14px;line-height:20px;color:#4b515b;font-weight:400;letter-spacing:0.186px;">Wood Corner</div><div class="t" style="left:708.80px;top:445.81px;font-size:14px;line-height:20px;color:#a3761c;font-weight:400;letter-spacing:0.385px;-webkit-text-stroke:0.75px currentColor;">Today</div><div class="t" style="left:1295.00px;top:445.81px;font-size:14px;line-height:20px;color:#4b515b;font-weight:400;letter-spacing:-0.134px;">My Company (San Francisco)</div><div class="badge" style="left:1653px;top:446.16px;width:48px;background:#47a3bb;"></div><div class="t" style="left:1659.00px;top:446.16px;font-size:13px;line-height:20px;color:#fff;font-weight:700;letter-spacing:0.000px;-webkit-text-stroke:0;transform:scaleX(0.9299);transform-origin:0.00px 0;">Ready</div><svg style="left:43px;top:444.96px;" width="20" height="18" viewBox="0 0 20 18"><polygon points="9.95,1.50 12.24,7.04 18.22,7.51 13.66,11.41 15.06,17.24 9.95,14.10 4.84,17.24 6.24,11.41 1.68,7.51 7.66,7.04" fill="none" stroke="#5f6670" stroke-width="1.15" stroke-linejoin="miter"/></svg><div class="a" style="left:14.00px;top:449.86px;width:14.00px;height:14.00px;border:1px solid #ababab;box-sizing:border-box;background:#fff;"></div><div class="t" style="left:93.50px;top:483.07px;font-size:14px;line-height:20px;color:#4b515b;font-weight:400;letter-spacing:0.555px;-webkit-text-stroke:0.75px currentColor;">WH/IN/00001</div><div class="t" style="left:708.80px;top:483.07px;font-size:14px;line-height:20px;color:#a3761c;font-weight:400;letter-spacing:0.385px;-webkit-text-stroke:0.75px currentColor;">Today</div><div class="t" style="left:1295.00px;top:483.07px;font-size:14px;line-height:20px;color:#4b515b;font-weight:400;letter-spacing:-0.134px;">My Company (San Francisco)</div><div class="badge" style="left:1653px;top:483.42px;width:43px;background:#e6e6e6;"></div><div class="t" style="left:1659.00px;top:483.42px;font-size:13px;line-height:20px;color:#3b4350;font-weight:700;letter-spacing:0.273px;-webkit-text-stroke:0;">Draft</div><svg style="left:43px;top:482.21999999999997px;" width="20" height="18" viewBox="0 0 20 18"><polygon points="9.95,1.50 12.24,7.04 18.22,7.51 13.66,11.41 15.06,17.24 9.95,14.10 4.84,17.24 6.24,11.41 1.68,7.51 7.66,7.04" fill="none" stroke="#5f6670" stroke-width="1.15" stroke-linejoin="miter"/></svg><div class="a" style="left:14.00px;top:487.12px;width:14.00px;height:14.00px;border:1px solid #ababab;box-sizing:border-box;background:#fff;"></div><div class="t" style="left:93.50px;top:520.33px;font-size:14px;line-height:20px;color:#4b515b;font-weight:400;letter-spacing:0.282px;-webkit-text-stroke:0.75px currentColor;">WH/OUT/00001</div><div class="t" style="left:304.60px;top:520.33px;font-size:14px;line-height:20px;color:#4b515b;font-weight:400;letter-spacing:0.186px;">Wood Corner</div><div class="t" style="left:708.80px;top:520.33px;font-size:14px;line-height:20px;color:#a3761c;font-weight:400;letter-spacing:0.385px;-webkit-text-stroke:0.75px currentColor;">Today</div><div class="t" style="left:969.30px;top:520.33px;font-size:14px;line-height:20px;color:#4b515b;font-weight:400;letter-spacing:0.486px;">outgoing shipment</div><div class="t" style="left:1295.00px;top:520.33px;font-size:14px;line-height:20px;color:#4b515b;font-weight:400;letter-spacing:-0.134px;">My Company (San Francisco)</div><div class="badge" style="left:1653px;top:520.68px;width:48px;background:#47a3bb;"></div><div class="t" style="left:1659.00px;top:520.68px;font-size:13px;line-height:20px;color:#fff;font-weight:700;letter-spacing:0.000px;-webkit-text-stroke:0;transform:scaleX(0.9299);transform-origin:0.00px 0;">Ready</div><svg style="left:43px;top:519.4799999999999px;" width="20" height="18" viewBox="0 0 20 18"><polygon points="9.95,1.50 12.24,7.04 18.22,7.51 13.66,11.41 15.06,17.24 9.95,14.10 4.84,17.24 6.24,11.41 1.68,7.51 7.66,7.04" fill="none" stroke="#5f6670" stroke-width="1.15" stroke-linejoin="miter"/></svg><div class="a" style="left:14.00px;top:524.38px;width:14.00px;height:14.00px;border:1px solid #ababab;box-sizing:border-box;background:#fff;"></div><div class="t" style="left:93.50px;top:557.59px;font-size:14px;line-height:20px;color:#4b515b;font-weight:400;letter-spacing:0.282px;-webkit-text-stroke:0.75px currentColor;">WH/OUT/00004</div><div class="t" style="left:304.60px;top:557.59px;font-size:14px;line-height:20px;color:#4b515b;font-weight:400;letter-spacing:0.186px;">Wood Corner</div><div class="t" style="left:708.80px;top:557.59px;font-size:14px;line-height:20px;color:#a3761c;font-weight:400;letter-spacing:0.385px;-webkit-text-stroke:0.75px currentColor;">Today</div><div class="t" style="left:969.30px;top:557.59px;font-size:14px;line-height:20px;color:#4b515b;font-weight:400;letter-spacing:0.185px;">your company warehouse</div><div class="t" style="left:1295.00px;top:557.59px;font-size:14px;line-height:20px;color:#4b515b;font-weight:400;letter-spacing:-0.134px;">My Company (San Francisco)</div><div class="badge" style="left:1653px;top:557.94px;width:43px;background:#e6e6e6;"></div><div class="t" style="left:1659.00px;top:557.94px;font-size:13px;line-height:20px;color:#3b4350;font-weight:700;letter-spacing:0.273px;-webkit-text-stroke:0;">Draft</div><svg style="left:43px;top:556.7399999999999px;" width="20" height="18" viewBox="0 0 20 18"><polygon points="9.95,1.50 12.24,7.04 18.22,7.51 13.66,11.41 15.06,17.24 9.95,14.10 4.84,17.24 6.24,11.41 1.68,7.51 7.66,7.04" fill="none" stroke="#5f6670" stroke-width="1.15" stroke-linejoin="miter"/></svg><div class="a" style="left:14.00px;top:561.64px;width:14.00px;height:14.00px;border:1px solid #ababab;box-sizing:border-box;background:#fff;"></div><div class="t" style="left:93.50px;top:594.85px;font-size:14px;line-height:20px;color:#4b515b;font-weight:400;letter-spacing:0.555px;-webkit-text-stroke:0.75px currentColor;">WH/IN/00005</div><div class="t" style="left:304.60px;top:594.85px;font-size:14px;line-height:20px;color:#4b515b;font-weight:400;letter-spacing:0.186px;">Wood Corner</div><div class="t" style="left:708.80px;top:594.85px;font-size:14px;line-height:20px;color:#a3761c;font-weight:400;letter-spacing:0.385px;-webkit-text-stroke:0.75px currentColor;">Today</div><div class="t" style="left:1295.00px;top:594.85px;font-size:14px;line-height:20px;color:#4b515b;font-weight:400;letter-spacing:-0.134px;">My Company (San Francisco)</div><div class="badge" style="left:1653px;top:595.20px;width:43px;background:#e6e6e6;"></div><div class="t" style="left:1659.00px;top:595.20px;font-size:13px;line-height:20px;color:#3b4350;font-weight:700;letter-spacing:0.273px;-webkit-text-stroke:0;">Draft</div><svg style="left:43px;top:593.9999999999999px;" width="20" height="18" viewBox="0 0 20 18"><polygon points="9.95,1.50 12.24,7.04 18.22,7.51 13.66,11.41 15.06,17.24 9.95,14.10 4.84,17.24 6.24,11.41 1.68,7.51 7.66,7.04" fill="none" stroke="#5f6670" stroke-width="1.15" stroke-linejoin="miter"/></svg><div class="a" style="left:14.00px;top:598.90px;width:14.00px;height:14.00px;border:1px solid #ababab;box-sizing:border-box;background:#fff;"></div><div class="t" style="left:93.50px;top:632.11px;font-size:14px;line-height:20px;color:#4b515b;font-weight:400;letter-spacing:0.555px;-webkit-text-stroke:0.75px currentColor;">WH/IN/00004</div><div class="t" style="left:304.60px;top:632.11px;font-size:14px;line-height:20px;color:#4b515b;font-weight:400;letter-spacing:0.186px;">Wood Corner</div><div class="t" style="left:708.80px;top:632.11px;font-size:14px;line-height:20px;color:#a3761c;font-weight:400;letter-spacing:0.385px;-webkit-text-stroke:0.75px currentColor;">Today</div><div class="t" style="left:1295.00px;top:632.11px;font-size:14px;line-height:20px;color:#4b515b;font-weight:400;letter-spacing:-0.134px;">My Company (San Francisco)</div><div class="badge" style="left:1653px;top:632.46px;width:48px;background:#47a3bb;"></div><div class="t" style="left:1659.00px;top:632.46px;font-size:13px;line-height:20px;color:#fff;font-weight:700;letter-spacing:0.000px;-webkit-text-stroke:0;transform:scaleX(0.9299);transform-origin:0.00px 0;">Ready</div><svg style="left:43px;top:631.26px;" width="20" height="18" viewBox="0 0 20 18"><polygon points="9.95,1.50 12.24,7.04 18.22,7.51 13.66,11.41 15.06,17.24 9.95,14.10 4.84,17.24 6.24,11.41 1.68,7.51 7.66,7.04" fill="none" stroke="#5f6670" stroke-width="1.15" stroke-linejoin="miter"/></svg><div class="a" style="left:14.00px;top:636.16px;width:14.00px;height:14.00px;border:1px solid #ababab;box-sizing:border-box;background:#fff;"></div><div class="t" style="left:93.50px;top:669.37px;font-size:14px;line-height:20px;color:#4b515b;font-weight:400;letter-spacing:0.282px;-webkit-text-stroke:0.75px currentColor;">WH/OUT/00013</div><div class="t" style="left:304.60px;top:669.37px;font-size:14px;line-height:20px;color:#4b515b;font-weight:400;letter-spacing:0.192px;">Gemini Furniture, Oscar Morgan</div><div class="t" style="left:708.80px;top:669.37px;font-size:14px;line-height:20px;color:#a3761c;font-weight:400;letter-spacing:0.385px;-webkit-text-stroke:0.75px currentColor;">Today</div><div class="t" style="left:969.30px;top:669.37px;font-size:14px;line-height:20px;color:#4b515b;font-weight:400;letter-spacing:0.000px;transform:scaleX(0.9674);transform-origin:0.00px 0;">S00024</div><div class="t" style="left:1295.00px;top:669.37px;font-size:14px;line-height:20px;color:#4b515b;font-weight:400;letter-spacing:-0.134px;">My Company (San Francisco)</div><div class="badge" style="left:1653px;top:669.72px;width:58px;background:#f3a82b;"></div><div class="t" style="left:1659.00px;top:669.72px;font-size:13px;line-height:20px;color:#111;font-weight:700;letter-spacing:-0.019px;-webkit-text-stroke:0;">Waiting</div><svg style="left:43px;top:668.52px;" width="20" height="18" viewBox="0 0 20 18"><polygon points="9.95,1.50 12.24,7.04 18.22,7.51 13.66,11.41 15.06,17.24 9.95,14.10 4.84,17.24 6.24,11.41 1.68,7.51 7.66,7.04" fill="none" stroke="#5f6670" stroke-width="1.15" stroke-linejoin="miter"/></svg><div class="a" style="left:14.00px;top:673.42px;width:14.00px;height:14.00px;border:1px solid #ababab;box-sizing:border-box;background:#fff;"></div><div class="t" style="left:93.50px;top:706.63px;font-size:14px;line-height:20px;color:#4b515b;font-weight:400;letter-spacing:0.282px;-webkit-text-stroke:0.75px currentColor;">WH/OUT/00010</div><div class="t" style="left:304.60px;top:706.63px;font-size:14px;line-height:20px;color:#4b515b;font-weight:400;letter-spacing:0.192px;">Gemini Furniture, Oscar Morgan</div><div class="t" style="left:709.30px;top:706.63px;font-size:14px;line-height:20px;color:#4b515b;font-weight:400;letter-spacing:0.579px;">Tomorrow</div><div class="t" style="left:969.30px;top:706.63px;font-size:14px;line-height:20px;color:#4b515b;font-weight:400;letter-spacing:0.000px;transform:scaleX(0.9674);transform-origin:0.00px 0;">S00021</div><div class="t" style="left:1295.00px;top:706.63px;font-size:14px;line-height:20px;color:#4b515b;font-weight:400;letter-spacing:-0.134px;">My Company (San Francisco)</div><div class="badge" style="left:1653px;top:706.98px;width:48px;background:#47a3bb;"></div><div class="t" style="left:1659.00px;top:706.98px;font-size:13px;line-height:20px;color:#fff;font-weight:700;letter-spacing:0.000px;-webkit-text-stroke:0;transform:scaleX(0.9299);transform-origin:0.00px 0;">Ready</div><svg style="left:43px;top:705.78px;" width="20" height="18" viewBox="0 0 20 18"><polygon points="9.95,1.50 12.24,7.04 18.22,7.51 13.66,11.41 15.06,17.24 9.95,14.10 4.84,17.24 6.24,11.41 1.68,7.51 7.66,7.04" fill="none" stroke="#5f6670" stroke-width="1.15" stroke-linejoin="miter"/></svg><div class="a" style="left:14.00px;top:710.68px;width:14.00px;height:14.00px;border:1px solid #ababab;box-sizing:border-box;background:#fff;"></div><div class="t" style="left:93.50px;top:743.89px;font-size:14px;line-height:20px;color:#4b515b;font-weight:400;letter-spacing:0.376px;-webkit-text-stroke:0.75px currentColor;">WH/OUT/00011</div><div class="t" style="left:304.60px;top:743.89px;font-size:14px;line-height:20px;color:#4b515b;font-weight:400;letter-spacing:0.192px;">Gemini Furniture, Oscar Morgan</div><div class="t" style="left:708.30px;top:743.89px;font-size:14px;line-height:20px;color:#4b515b;font-weight:400;letter-spacing:-0.039px;">In 2 days</div><div class="t" style="left:969.30px;top:743.89px;font-size:14px;line-height:20px;color:#4b515b;font-weight:400;letter-spacing:0.000px;transform:scaleX(0.9674);transform-origin:0.00px 0;">S00022</div><div class="t" style="left:1295.00px;top:743.89px;font-size:14px;line-height:20px;color:#4b515b;font-weight:400;letter-spacing:-0.134px;">My Company (San Francisco)</div><div class="badge" style="left:1653px;top:744.24px;width:48px;background:#47a3bb;"></div><div class="t" style="left:1659.00px;top:744.24px;font-size:13px;line-height:20px;color:#fff;font-weight:700;letter-spacing:0.000px;-webkit-text-stroke:0;transform:scaleX(0.9299);transform-origin:0.00px 0;">Ready</div><svg style="left:43px;top:743.04px;" width="20" height="18" viewBox="0 0 20 18"><polygon points="9.95,1.50 12.24,7.04 18.22,7.51 13.66,11.41 15.06,17.24 9.95,14.10 4.84,17.24 6.24,11.41 1.68,7.51 7.66,7.04" fill="none" stroke="#5f6670" stroke-width="1.15" stroke-linejoin="miter"/></svg><div class="a" style="left:14.00px;top:747.94px;width:14.00px;height:14.00px;border:1px solid #ababab;box-sizing:border-box;background:#fff;"></div><div class="t" style="left:93.50px;top:781.15px;font-size:14px;line-height:20px;color:#4b515b;font-weight:400;letter-spacing:0.282px;-webkit-text-stroke:0.75px currentColor;">WH/OUT/00005</div><div class="t" style="left:304.60px;top:781.15px;font-size:14px;line-height:20px;color:#4b515b;font-weight:400;letter-spacing:0.186px;">Wood Corner</div><div class="t" style="left:708.30px;top:781.15px;font-size:14px;line-height:20px;color:#4b515b;font-weight:400;letter-spacing:-0.039px;">In 3 days</div><div class="t" style="left:969.30px;top:781.15px;font-size:14px;line-height:20px;color:#4b515b;font-weight:400;letter-spacing:0.486px;">outgoing shipment</div><div class="t" style="left:1295.00px;top:781.15px;font-size:14px;line-height:20px;color:#4b515b;font-weight:400;letter-spacing:-0.134px;">My Company (San Francisco)</div><div class="badge" style="left:1653px;top:781.50px;width:48px;background:#47a3bb;"></div><div class="t" style="left:1659.00px;top:781.50px;font-size:13px;line-height:20px;color:#fff;font-weight:700;letter-spacing:0.000px;-webkit-text-stroke:0;transform:scaleX(0.9299);transform-origin:0.00px 0;">Ready</div><svg style="left:43px;top:780.3px;" width="20" height="18" viewBox="0 0 20 18"><polygon points="9.95,1.50 12.24,7.04 18.22,7.51 13.66,11.41 15.06,17.24 9.95,14.10 4.84,17.24 6.24,11.41 1.68,7.51 7.66,7.04" fill="none" stroke="#5f6670" stroke-width="1.15" stroke-linejoin="miter"/></svg><div class="a" style="left:14.00px;top:785.20px;width:14.00px;height:14.00px;border:1px solid #ababab;box-sizing:border-box;background:#fff;"></div><div class="t" style="left:93.50px;top:818.41px;font-size:14px;line-height:20px;color:#4b515b;font-weight:400;letter-spacing:0.282px;-webkit-text-stroke:0.75px currentColor;">WH/OUT/00012</div><div class="t" style="left:304.60px;top:818.41px;font-size:14px;line-height:20px;color:#4b515b;font-weight:400;letter-spacing:0.192px;">Gemini Furniture, Oscar Morgan</div><div class="t" style="left:708.30px;top:818.41px;font-size:14px;line-height:20px;color:#4b515b;font-weight:400;letter-spacing:-0.039px;">In 3 days</div><div class="t" style="left:969.30px;top:818.41px;font-size:14px;line-height:20px;color:#4b515b;font-weight:400;letter-spacing:0.000px;transform:scaleX(0.9674);transform-origin:0.00px 0;">S00023</div><div class="t" style="left:1295.00px;top:818.41px;font-size:14px;line-height:20px;color:#4b515b;font-weight:400;letter-spacing:-0.134px;">My Company (San Francisco)</div><div class="badge" style="left:1653px;top:818.76px;width:48px;background:#47a3bb;"></div><div class="t" style="left:1659.00px;top:818.76px;font-size:13px;line-height:20px;color:#fff;font-weight:700;letter-spacing:0.000px;-webkit-text-stroke:0;transform:scaleX(0.9299);transform-origin:0.00px 0;">Ready</div><svg style="left:43px;top:817.56px;" width="20" height="18" viewBox="0 0 20 18"><polygon points="9.95,1.50 12.24,7.04 18.22,7.51 13.66,11.41 15.06,17.24 9.95,14.10 4.84,17.24 6.24,11.41 1.68,7.51 7.66,7.04" fill="none" stroke="#5f6670" stroke-width="1.15" stroke-linejoin="miter"/></svg><div class="a" style="left:14.00px;top:822.46px;width:14.00px;height:14.00px;border:1px solid #ababab;box-sizing:border-box;background:#fff;"></div><div class="a" style="left:0.00px;top:848.00px;width:1843.00px;height:2.00px;background:#dee0e4;"></div><div class="a" style="left:0.00px;top:850.00px;width:1843.00px;height:90.00px;background:#f5f6f9;"></div><div class="a" style="left:795.00px;top:116.00px;width:179.00px;height:182.50px;background:#fff;border:1px solid #ced4da;box-sizing:border-box;box-shadow:0 4px 7px -1px rgba(0,0,0,.13);z-index:10;"></div><div class="a" style="left:796.00px;top:264.00px;width:177.00px;height:28.00px;background:#e9e9ea;z-index:10;"></div><div class="t" style="left:818.00px;top:127.45px;font-size:14px;line-height:20px;color:#4b515b;font-weight:400;letter-spacing:0.666px;z-index:12;">Export</div><div class="t" style="left:818.00px;top:155.35px;font-size:14px;line-height:20px;color:#4b515b;font-weight:400;letter-spacing:0.583px;z-index:12;">Delete</div><div class="t" style="left:819.00px;top:183.25px;font-size:14px;line-height:20px;color:#4b515b;font-weight:400;letter-spacing:0.030px;z-index:12;">Send email</div><div class="t" style="left:819.00px;top:211.15px;font-size:14px;line-height:20px;color:#4b515b;font-weight:400;letter-spacing:0.376px;z-index:12;">Validate</div><div class="t" style="left:818.00px;top:239.05px;font-size:14px;line-height:20px;color:#4b515b;font-weight:400;letter-spacing:0.226px;z-index:12;">Unreserve</div><div class="t" style="left:818.00px;top:266.95px;font-size:14px;line-height:20px;color:#2d3137;font-weight:400;letter-spacing:0.138px;z-index:12;">Picking Excel Report</div><div class="a" style="left:3.00px;top:173.50px;width:265.50px;height:235.50px;border:3px solid #ff0000;box-sizing:border-box;border-radius:2px;z-index:13;"></div><div class="a" style="left:797.50px;top:256.50px;width:177.50px;height:45.50px;border:3px solid #ff0000;box-sizing:border-box;border-radius:2px;z-index:13;"></div>
</body></html>
